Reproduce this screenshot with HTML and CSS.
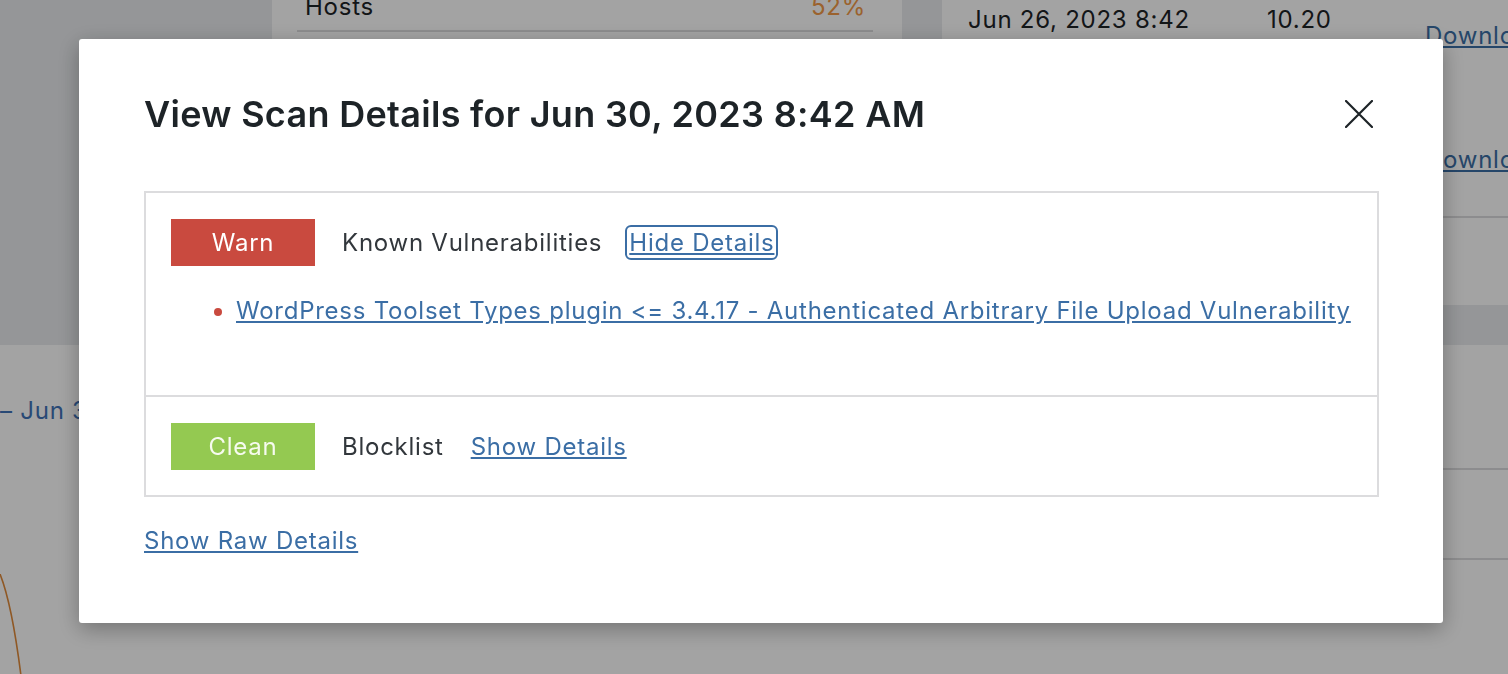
FILE: index.html
```html
<!DOCTYPE html>
<html lang="en">
<head>
	<meta charset="UTF-8">
	<meta name="viewport" content="width=device-width, initial-scale=1.0">
	<title>Scan Details</title>
	<link rel="stylesheet" href="styles.css">
</head>
<body>

<div class="dash">
	<section class="card card-hosts">
		<div class="stat-row">
			<span>Hosts</span>
			<span class="stat-pct">52%</span>
		</div>
	</section>

	<section class="card card-scans">
		<div class="scan-line first">
			<span>Jun 26, 2023 8:42</span>
			<span>10.20</span>
			<a href="#" class="dl">Download</a>
		</div>
		<div class="scan-line second">
			<span>Jun 25, 2023 8:42</span>
			<span>10.20</span>
			<a href="#" class="dl">Download</a>
		</div>
	</section>

	<section class="card card-chart">
		<h3 class="range">– Jun 30, 2023</h3>
		<svg class="chart" width="80" height="120" viewBox="0 0 80 120">
			<path d="M0 0 C 8 20, 16 60, 22 110" fill="none" stroke="#e08a3a" stroke-width="1.6"/>
		</svg>
	</section>

	<section class="card card-list">
		<div class="list-line tall"></div>
		<div class="list-line"></div>
	</section>
</div>

<div class="overlay">
	<div class="modal" role="dialog">
		<div class="modal-head">
			<h2 class="modal-title">View Scan Details for Jun 30, 2023 8:42 AM</h2>
			<button class="modal-close" aria-label="Close">
				<svg width="28" height="28" viewBox="0 0 28 28">
					<path d="M1 1 L27 27 M27 1 L1 27" stroke="#1d2327" stroke-width="2.2" stroke-linecap="round"/>
				</svg>
			</button>
		</div>

		<div class="results">
			<div class="result">
				<div class="result-summary">
					<span class="badge warn">Warn</span>
					<span class="result-label">Known Vulnerabilities</span>
					<a href="#" class="toggle focused">Hide Details</a>
				</div>
				<ul class="issues">
					<li><a href="#">WordPress Toolset Types plugin &lt;= 3.4.17 - Authenticated Arbitrary File Upload Vulnerability</a></li>
				</ul>
			</div>
			<div class="result">
				<div class="result-summary">
					<span class="badge clean">Clean</span>
					<span class="result-label">Blocklist</span>
					<a href="#" class="toggle">Show Details</a>
				</div>
			</div>
		</div>

		<a href="#" class="raw-link">Show Raw Details</a>
	</div>
</div>

</body>
</html>
```

FILE: styles.css
```css
body {
	margin: 0;
	font-family: Inter, "Noto Sans", sans-serif;
	font-size: 24px;
	letter-spacing: 0.75px;
	color: #1d2327;
	background-color: #e9ebee;
	overflow: hidden;
	height: 674px;
}

a {
	color: #3b6ea5;
}

/* dashboard behind the dialog */
.dash {
	display: grid;
	grid-template-columns: 272px 630px 40px 1fr;
	grid-template-rows: 345px 420px;
	row-gap: 40px;
	margin-top: -40px;
}

.card {
	background-color: #fff;
}

.card-hosts {
	grid-column: 2;
	grid-row: 1;
	padding: 33px 29px 0 25px;
}

.stat-row {
	display: flex;
	justify-content: space-between;
	line-height: 27px;
	padding: 0 7px 10px 8px;
	border-bottom: 2px solid #dcdcde;
}

.stat-pct {
	color: #f29a48;
}

.card-scans {
	grid-column: 4;
	grid-row: 1;
}

.scan-line {
	display: grid;
	grid-template-columns: 299px 158px 1fr;
	padding-left: 26px;
	line-height: 27px;
	white-space: nowrap;
	box-sizing: border-box;
}

.scan-line.first {
	padding-top: 46px;
	height: 120px;
}

.scan-line.first .dl {
	margin-top: 16px;
}

.scan-line.second {
	height: 138px;
	padding-top: 66px;
	border-bottom: 2px solid #dcdcde;
}

.scan-line.second span {
	visibility: hidden;
}

.card-chart {
	grid-column: 1 / 4;
	grid-row: 2;
}

.range {
	margin: 0;
	padding-top: 52px;
	font-weight: 400;
	font-size: 24px;
	line-height: 27px;
	color: #3f72b8;
	white-space: nowrap;
}

.chart {
	display: block;
	margin-top: 150px;
}

.card-list {
	grid-column: 4;
	grid-row: 2;
}

.list-line {
	height: 88px;
	border-bottom: 2px solid #dcdcde;
}

.list-line.tall {
	height: 123px;
}

/* dialog */
.overlay {
	position: fixed;
	inset: 0;
	background-color: rgba(0, 0, 0, 0.36);
	padding: 39px 0 0 79px;
}

.modal {
	width: 1364px;
	box-sizing: border-box;
	background-color: #fff;
	border-radius: 3px;
	padding: 55px 64px 68px 65px;
	box-shadow: 0 6px 22px rgba(0, 0, 0, 0.3);
}

.modal-head {
	display: flex;
	justify-content: space-between;
	align-items: center;
	height: 40px;
}

.modal-title {
	margin: 0;
	font-size: 36px;
	font-weight: 600;
	letter-spacing: 0.3px;
	color: #1d2327;
}

.modal-close {
	width: 40px;
	height: 40px;
	display: flex;
	align-items: center;
	justify-content: center;
	padding: 0;
	border: none;
	background: none;
}

.results {
	margin-top: 57px;
	border: 2px solid #dcdcde;
}

.result {
	padding: 26px 25px 25px;
}

.result + .result {
	border-top: 2px solid #dcdcde;
}

.result-summary {
	display: flex;
	align-items: center;
	gap: 27px;
	line-height: 27px;
}

.badge {
	width: 144px;
	height: 47px;
	display: flex;
	align-items: center;
	justify-content: center;
	color: #fff;
}

.badge.warn {
	background-color: #c94a3f;
}

.badge.clean {
	background-color: #94c951;
	color: #f6fbef;
}

.result-label {
	color: #32373c;
}

.toggle.focused {
	border-radius: 2px;
	outline: 2px solid #3b6ea5;
	outline-offset: 2px;
}

.issues {
	margin: 30px 0 44px 0;
	padding-left: 65px;
	line-height: 30px;
}

.issues li::marker {
	color: #c94a3f;
}

.raw-link {
	display: inline-block;
	margin-top: 30px;
	line-height: 27px;
}
```
